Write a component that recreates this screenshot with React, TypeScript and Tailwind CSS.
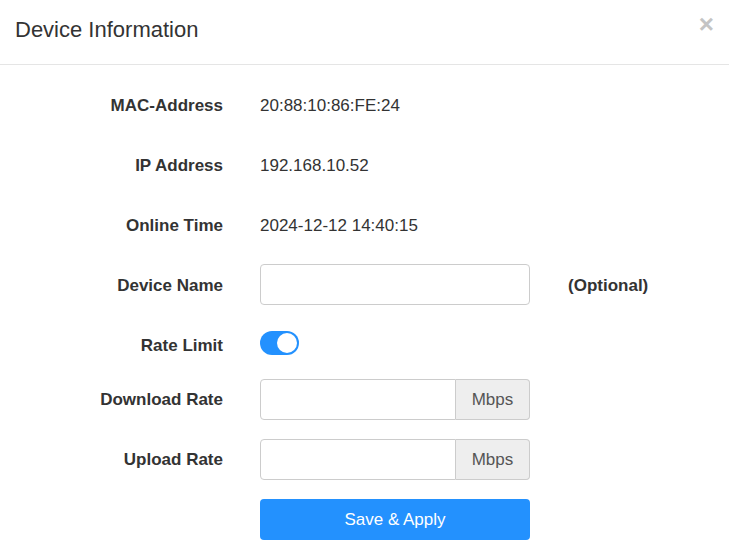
import { useState } from 'react';

const infoRows = [
  { label: 'MAC-Address', value: '20:88:10:86:FE:24' },
  { label: 'IP Address', value: '192.168.10.52' },
  { label: 'Online Time', value: '2024-12-12 14:40:15' },
];

function Label({ children }: { children: React.ReactNode }) {
  return <div className="w-[223px] shrink-0 text-right font-bold">{children}</div>;
}

function RateInput() {
  return (
    <div className="flex h-[41px] w-[270px]">
      <input
        type="text"
        className="h-full w-[196px] rounded-l-[4px] border border-[#ccc] px-3 outline-none"
      />
      <span className="flex h-full flex-1 items-center justify-center rounded-r-[4px] border border-l-0 border-[#ccc] bg-[#eee] text-[#555]">
        Mbps
      </span>
    </div>
  );
}

export default function App() {
  const [limit, setLimit] = useState(true);

  return (
    <div
      className="min-h-screen w-full bg-white text-[17px] text-[#333]"
      style={{ fontFamily: '"Liberation Sans", Arial, sans-serif' }}
    >
      <div className="relative h-[65px] border-b border-[#e5e5e5] px-[15px] pt-[16px]">
        <h4 className="text-[22px] leading-[28px] font-normal">Device Information</h4>
        <button className="absolute top-[10px] right-[15px] text-[26px] leading-[28px] font-bold text-[#c4c4c4]">
          ×
        </button>
      </div>

      <div className="flex flex-col pt-[20px]">
        {infoRows.map((row, i) => (
          <div key={row.label} className={`flex h-[41px] items-center ${i > 0 ? 'mt-[19px]' : ''}`}>
            <Label>{row.label}</Label>
            <div className="ml-[37px]">{row.value}</div>
          </div>
        ))}

        <div className="mt-[19px] flex h-[41px] items-center">
          <Label>Device Name</Label>
          <input
            type="text"
            className="mt-[-2px] ml-[37px] h-[41px] w-[270px] rounded-[4px] border border-[#ccc] px-3 outline-none"
          />
          <div className="ml-[38px] font-bold">(Optional)</div>
        </div>

        <div className="mt-[19px] flex h-[41px] items-center">
          <Label>Rate Limit</Label>
          <button
            onClick={() => setLimit(!limit)}
            className={`mb-[6px] ml-[37px] flex h-[24px] w-[39px] items-center rounded-full px-[2px] ${
              limit ? 'justify-end bg-[#2391fe]' : 'justify-start bg-[#ccc]'
            }`}
          >
            <span className="h-[20px] w-[20px] rounded-full bg-white" />
          </button>
        </div>

        <div className="mt-[13px] flex h-[41px] items-center">
          <Label>Download Rate</Label>
          <div className="ml-[37px]">
            <RateInput />
          </div>
        </div>

        <div className="mt-[19px] flex h-[41px] items-center">
          <Label>Upload Rate</Label>
          <div className="ml-[37px]">
            <RateInput />
          </div>
        </div>

        <div className="mt-[19px] flex h-[41px] items-center">
          <div className="w-[223px] shrink-0" />
          <button className="ml-[37px] h-[41px] w-[270px] rounded-[4px] bg-[#2391fe] text-white">
            Save &amp; Apply
          </button>
        </div>
      </div>
    </div>
  );
}
